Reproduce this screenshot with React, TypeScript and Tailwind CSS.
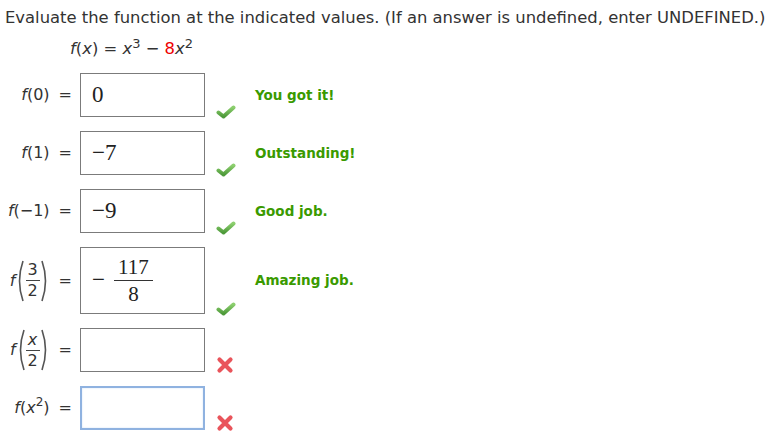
import type { ReactNode } from 'react';

// Function evaluation exercise with graded answer boxes

const sans = "font-['DejaVu_Sans','Verdana',sans-serif]";
const serif = "font-['Liberation_Serif','Times_New_Roman',serif]";

function Check() {
  return (
    <svg width="20" height="14" viewBox="0 0 20 14">
      <defs>
        <linearGradient id="cg" x1="0" y1="0" x2="0" y2="1">
          <stop offset="0" stopColor="#8ccf6e" />
          <stop offset="1" stopColor="#4e9a3a" />
        </linearGradient>
      </defs>
      <path
        d="M2.5 7.5 L7.5 11.5 L17.5 2.5"
        fill="none"
        stroke="url(#cg)"
        strokeWidth="4"
        strokeLinecap="round"
        strokeLinejoin="round"
      />
    </svg>
  );
}

function Cross() {
  return (
    <svg width="18" height="18" viewBox="0 0 18 18">
      <path
        d="M3.5 3.5 L14.5 14.5 M14.5 3.5 L3.5 14.5"
        fill="none"
        stroke="#e9545b"
        strokeWidth="4.2"
        strokeLinecap="round"
      />
    </svg>
  );
}

function Parens({ children }: { children: ReactNode }) {
  return (
    <span className="inline-flex items-center">
      <svg width="9" height="42" viewBox="0 0 9 42">
        <path d="M8 1 Q1 21 8 41" fill="none" stroke="#555" strokeWidth="1.6" />
      </svg>
      {children}
      <svg width="9" height="42" viewBox="0 0 9 42">
        <path d="M1 1 Q8 21 1 41" fill="none" stroke="#555" strokeWidth="1.6" />
      </svg>
    </span>
  );
}

function SmallFrac({ top, bottom }: { top: ReactNode; bottom: ReactNode }) {
  return (
    <span className="inline-flex flex-col items-center text-[16px] leading-[18px] px-[1px]">
      <span className="px-[2px]">{top}</span>
      <span className="h-px w-[14px] bg-[#444] my-[1px]" />
      <span>{bottom}</span>
    </span>
  );
}

type Row = {
  label: ReactNode;
  value?: ReactNode;
  ok: boolean;
  note?: string;
  tall?: boolean;
  focused?: boolean;
};

const rows: Row[] = [
  { label: <><i>f</i>(0)</>, value: '0', ok: true, note: 'You got it!' },
  { label: <><i>f</i>(1)</>, value: '\u22127', ok: true, note: 'Outstanding!' },
  { label: <><i>f</i>({'\u2212'}1)</>, value: '\u22129', ok: true, note: 'Good job.' },
  {
    label: (
      <span className="inline-flex items-center">
        <i>f</i>
        <Parens>
          <SmallFrac top="3" bottom="2" />
        </Parens>
      </span>
    ),
    value: (
      <span className="inline-flex items-center gap-[9px]">
        <span>{'\u2212'}</span>
        <span className="inline-flex flex-col items-center text-[21px] leading-[22px]">
          <span className="px-[1px]">117</span>
          <span className="h-px w-[39px] bg-[#333] my-[2px]" />
          <span>8</span>
        </span>
      </span>
    ),
    ok: true,
    note: 'Amazing job.',
    tall: true,
  },
  {
    label: (
      <span className="inline-flex items-center">
        <i>f</i>
        <Parens>
          <SmallFrac top={<i>x</i>} bottom="2" />
        </Parens>
      </span>
    ),
    ok: false,
  },
  {
    label: (
      <>
        <i>f</i>(<i>x</i>
        <sup className="text-[12px]">2</sup>)
      </>
    ),
    ok: false,
    focused: true,
  },
];

export default function App() {
  return (
    <div className={`${sans} bg-white text-[#333] w-[772px] h-[442px] overflow-hidden`}>
      <p className="pl-[5px] pt-[7px] text-[16.4px] leading-[22px] whitespace-nowrap">
        Evaluate the function at the indicated values. (If an answer is undefined, enter UNDEFINED.)
      </p>
      <p className="pl-[70px] mt-[10px] text-[16.4px] leading-[20px]">
        <i>f</i>(<i>x</i>) = <i>x</i>
        <sup className="text-[13px]">3</sup> {'\u2212'} <span className="text-[#e00]">8</span>
        <i>x</i>
        <sup className="text-[13px]">2</sup>
      </p>

      <div className="mt-[14px] flex flex-col gap-[14px]">
        {rows.map((r, i) => (
          <div key={i} className="flex items-stretch">
            <div className="w-[72px] flex items-center justify-end text-[16px] whitespace-nowrap">
              {r.label}
              <span className="ml-[9px]">=</span>
            </div>
            <div
              className={`ml-[8px] w-[125px] ${r.tall ? 'h-[67px]' : 'h-[44px]'} flex items-center pl-[11px] ${serif} text-[23px] text-[#222] ${
                r.focused
                  ? 'border-2 border-[#8fb2e0] shadow-[inset_0_0_2px_#cfe0f5]'
                  : 'border border-[#7b7b7b]'
              }`}
            >
              {r.value}
            </div>
            <div className="w-[50px] flex items-end pl-[11px] translate-y-[2px]">
              {r.ok ? <Check /> : <Cross />}
            </div>
            {r.note && (
              <div className="flex items-center text-[13.5px] font-bold text-[#3a9a00]">
                {r.note}
              </div>
            )}
          </div>
        ))}
      </div>
    </div>
  );
}
